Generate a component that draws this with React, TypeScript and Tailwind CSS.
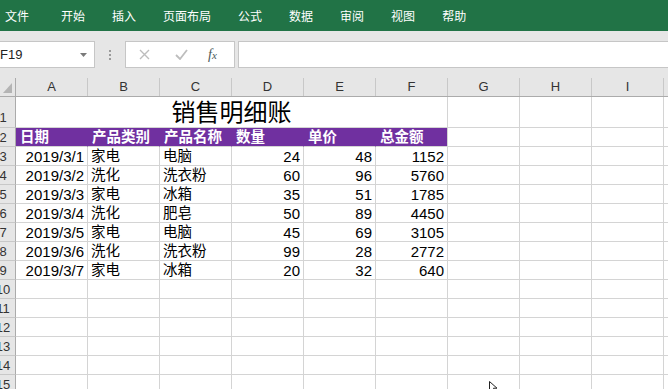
import React from "react";

const menus = ["文件", "开始", "插入", "页面布局", "公式", "数据", "审阅", "视图", "帮助"];
const cols = ["A", "B", "C", "D", "E", "F", "G", "H", "I", "J"];

const rows = [
  ["2019/3/1", "家电", "电脑", "24", "48", "1152"],
  ["2019/3/2", "洗化", "洗衣粉", "60", "96", "5760"],
  ["2019/3/3", "家电", "冰箱", "35", "51", "1785"],
  ["2019/3/4", "洗化", "肥皂", "50", "89", "4450"],
  ["2019/3/5", "家电", "电脑", "45", "69", "3105"],
  ["2019/3/6", "洗化", "洗衣粉", "99", "28", "2772"],
  ["2019/3/7", "家电", "冰箱", "20", "32", "640"],
];

const headers = ["日期", "产品类别", "产品名称", "数量", "单价", "总金额"];

function RowHead({ n, tall }: { n: number; tall?: boolean }) {
  return (
    <div
      className={`w-[16px] shrink-0 overflow-hidden bg-[#e6e6e6] border-r border-b border-r-[#ababab] border-b-[#c8c8c8] flex ${
        tall ? "items-end pb-[3px]" : "items-center"
      }`}
    >
      <span className="w-[26px] shrink-0 -ml-[10px] text-center text-[13px] leading-none text-[#333]">{n}</span>
    </div>
  );
}

function Empty() {
  return <div className="w-[72px] shrink-0 border-r border-b border-[#d4d4d4]" />;
}

export default function App() {
  return (
    <div className="w-[668px] h-[389px] overflow-hidden bg-white font-['Liberation_Sans','Noto_Sans_CJK_SC',sans-serif] relative">
      {/* ribbon tabs */}
      <div className="h-[31px] bg-[#217346] flex items-center pl-[5px] gap-[27px] text-white text-[12px] font-['Noto_Sans_CJK_SC',sans-serif]">
        {menus.map((m, i) => (
          <span key={m} className={i === 0 ? "mr-[5px]" : ""}>
            {m}
          </span>
        ))}
      </div>

      {/* formula bar */}
      <div className="bg-[#e6e6e6] pt-[10px]">
        <div className="h-[27px] flex items-stretch">
          <div className="w-[95px] bg-white border border-l-0 border-[#c6c6c6] flex items-center justify-between pr-[7px] text-[13px] text-[#222]">
            <span>F19</span>
            <svg width="7" height="4" viewBox="0 0 7 4">
              <path d="M0 0h7L3.5 4z" fill="#7a7a7a" />
            </svg>
          </div>
          <div className="w-[30px] flex flex-col items-center justify-center gap-[2px]">
            <span className="w-[2px] h-[2px] bg-[#9a9a9a]" />
            <span className="w-[2px] h-[2px] bg-[#9a9a9a]" />
            <span className="w-[2px] h-[2px] bg-[#9a9a9a]" />
          </div>
          <div className="w-[110px] bg-white border border-[#c6c6c6] flex items-center pl-[13px]">
            <svg width="11" height="11" viewBox="0 0 11 11">
              <path d="M1 1l9 9M10 1l-9 9" stroke="#bdbdbd" strokeWidth="1.4" />
            </svg>
            <svg width="13" height="11" viewBox="0 0 13 11" className="ml-[25px]">
              <path d="M1 6l4 4 7-9" stroke="#bdbdbd" strokeWidth="1.8" fill="none" />
            </svg>
            <span className="ml-[20px] italic font-['Liberation_Serif',serif] text-[14px] text-[#4a5a5a] leading-none">
              f<span className="text-[11px]">x</span>
            </span>
          </div>
          <div className="flex-1 ml-[3px] bg-white border border-r-0 border-[#c6c6c6]" />
        </div>

        {/* column headers */}
        <div className="mt-[10px] h-[19px] flex border-b border-[#ababab]">
          <div className="w-[16px] shrink-0 border-r border-[#ababab] flex items-end pl-[3px] pb-[3px]">
            <svg width="9" height="10" viewBox="0 0 9 10">
              <path d="M9 0v10H0z" fill="#b4b4b4" />
            </svg>
          </div>
          {cols.map((c) => (
            <div
              key={c}
              className="w-[72px] shrink-0 border-r border-[#c8c8c8] flex items-center justify-center text-[13px] text-[#333]"
            >
              {c}
            </div>
          ))}
        </div>
      </div>

      {/* grid */}
      <div className="text-[14.5px] text-black">
        <div className="h-[31px] flex">
          <RowHead n={1} tall />
          <div className="w-[432px] shrink-0 border-r border-b border-[#d4d4d4] flex items-end justify-center pb-[2px] text-[24px] leading-none">
            销售明细账
          </div>
          {cols.slice(6).map((c) => (
            <Empty key={c} />
          ))}
        </div>

        <div className="h-[19px] flex">
          <RowHead n={2} />
          {headers.map((h, i) => (
            <div
              key={h}
              className={`w-[72px] shrink-0 bg-[#7030a0] border-b border-b-[#d4d4d4] border-r flex items-center pl-[4px] text-white font-bold leading-none ${
                i === 5 ? "border-r-[#d4d4d4]" : "border-r-[#7030a0]"
              }`}
            >
              {h}
            </div>
          ))}
          {cols.slice(6).map((c) => (
            <Empty key={c} />
          ))}
        </div>

        {rows.map((r, ri) => (
          <div key={ri} className="h-[19px] flex">
            <RowHead n={ri + 3} />
            {r.map((v, ci) => (
              <div
                key={ci}
                className={`w-[72px] shrink-0 border-r border-b border-[#d4d4d4] flex items-center leading-none ${
                  ci === 1 || ci === 2 ? "justify-start pl-[3px]" : "justify-end pr-[3px] text-[15px]"
                }`}
              >
                {v}
              </div>
            ))}
            {cols.slice(6).map((c) => (
              <Empty key={c} />
            ))}
          </div>
        ))}

        {[10, 11, 12, 13, 14, 15].map((n) => (
          <div key={n} className="h-[19px] flex">
            <RowHead n={n} />
            {cols.map((c) => (
              <Empty key={c} />
            ))}
          </div>
        ))}
      </div>

      {/* mouse pointer */}
      <svg width="9" height="12" viewBox="0 0 9 12" className="absolute left-[489px] top-[381px]">
        <path d="M0.5 0.5v10l2.5-2.5 2 3.5 1.5-1-2-3.3h3.5z" fill="white" stroke="#222" strokeWidth="1" />
      </svg>
    </div>
  );
}
